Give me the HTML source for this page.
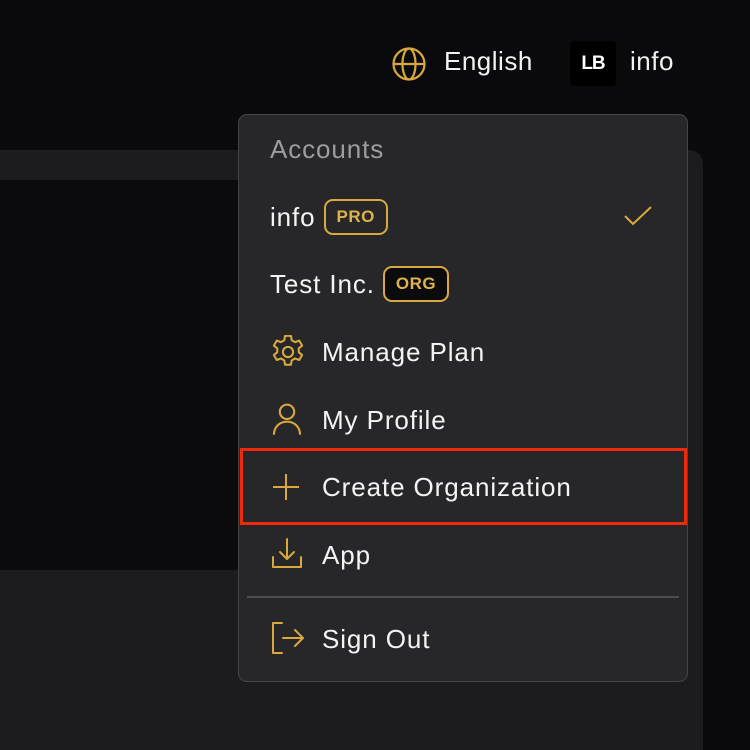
<!DOCTYPE html>
<html><head><meta charset="utf-8"><style>
*{margin:0;padding:0;box-sizing:border-box}
body{width:750px;height:744px;background:#0a0a0c;position:relative;overflow:hidden;font-family:"Liberation Sans",sans-serif;color:#f2f2f2}
.panel{position:absolute;left:0;top:150px;width:703px;height:600px;background:#1c1c1f;border-top-right-radius:14px}
.strip{position:absolute;left:0;top:180px;width:260px;height:390px;background:#0b0b0d}
.top{position:absolute;top:46px;font-size:26px;letter-spacing:0.5px}
.menu{position:absolute;left:238px;top:114px;width:450px;height:568px;background:#27272a;border:1.5px solid #44444a;border-radius:9px}
.it{position:absolute;left:31px;font-size:26px;letter-spacing:0.9px;color:#f4f4f4;display:flex;align-items:center;height:36px}
.ic{position:absolute;left:32px}
.badge{display:inline-block;border:2px solid #d9a93e;border-radius:9px;color:#e0b24a;font-size:17px;font-weight:bold;padding:7px 11px;margin-left:8px;line-height:18px;letter-spacing:0.5px}
</style></head><body>
<div class="panel"></div>
<div class="strip"></div>
<svg style="position:absolute;left:391px;top:46px" width="36" height="36" viewBox="0 0 36 36" fill="none" stroke="#d9a93e" stroke-width="2.2"><circle cx="18" cy="18" r="15.5"/><ellipse cx="18" cy="18" rx="6.5" ry="15.5"/><line x1="2.5" y1="18" x2="33.5" y2="18"/></svg>
<div class="top" style="left:444px">English</div>
<div style="position:absolute;left:570px;top:41px;width:46px;height:45px;background:#000;border-radius:4px;color:#fff;font-weight:bold;font-size:19px;text-align:center;line-height:45px;letter-spacing:-1px">LB</div>
<div class="top" style="left:630px">info</div>
<div class="menu">
<div class="it" style="top:16px;color:#9c9ca2">Accounts</div>
<div class="it" style="top:84px">info<span class="badge">PRO</span></div>
<svg style="position:absolute;left:384px;top:90px" width="30" height="22" viewBox="0 0 30 22" fill="none" stroke="#d9a93e" stroke-width="2"><path d="M2 11l8 8L28 2"/></svg>
<div class="it" style="top:151px">Test Inc.<span class="badge" style="background:#0b0b0d">ORG</span></div>
<svg class="ic" style="top:220px" width="34" height="34" viewBox="2 2 20 20" fill="none" stroke="#d9a93e" stroke-width="1.2" stroke-linejoin="round"><path d="M10.3 2.5h3.4l.5 2.6 1.9 1.1 2.5-.9 1.7 2.9-2 1.7v2.2l2 1.7-1.7 2.9-2.5-.9-1.9 1.1-.5 2.6h-3.4l-.5-2.6-1.9-1.1-2.5.9-1.7-2.9 2-1.7v-2.2l-2-1.7 1.7-2.9 2.5.9 1.9-1.1z"/><circle cx="12" cy="12" r="3"/></svg>
<div class="it" style="top:219px;left:83px">Manage Plan</div>
<svg class="ic" style="top:287px" width="32" height="34" viewBox="0 0 24 26" fill="none" stroke="#d9a93e" stroke-width="1.6"><circle cx="12" cy="7.5" r="5.5"/><path d="M2 25c0-6 4.5-10 10-10s10 4 10 10"/></svg>
<div class="it" style="top:287px;left:83px">My Profile</div>
<div style="position:absolute;left:1px;top:333px;width:447px;height:77px;border:3px solid #f02a0c"></div>
<svg class="ic" style="top:357px" width="30" height="30" viewBox="0 0 30 30" stroke="#d9a93e" stroke-width="2"><path d="M15 2v26M2 15h26"/></svg>
<div class="it" style="top:354px;left:83px">Create Organization</div>
<svg class="ic" style="top:422px" width="32" height="34" viewBox="0 0 32 34" fill="none" stroke="#d9a93e" stroke-width="2" stroke-linecap="round" stroke-linejoin="round"><path d="M16 2v20M9 15l7 7 7-7M2 20v10h28V20"/></svg>
<div class="it" style="top:422px;left:83px">App</div>
<div style="position:absolute;left:8px;top:481px;width:432px;height:2px;background:#4a4c52"></div>
<svg class="ic" style="top:506px" width="34" height="34" viewBox="0 0 34 34" fill="none" stroke="#d9a93e" stroke-width="2" stroke-linecap="round" stroke-linejoin="round"><path d="M11 2H2v30h9M12 17h20M24 9l8 8-8 8"/></svg>
<div class="it" style="top:506px;left:83px">Sign Out</div>
</div>
</body></html>
